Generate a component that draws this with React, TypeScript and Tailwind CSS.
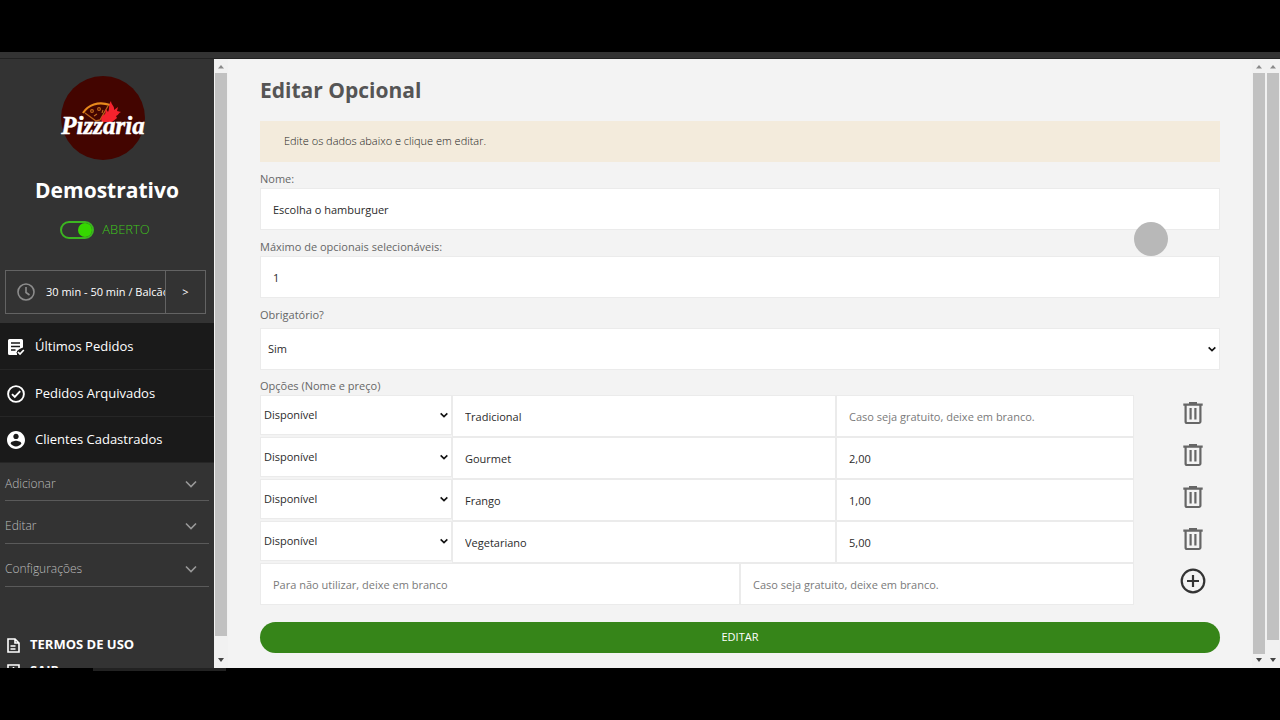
import React from 'react';

const field =
  'min-w-0 border border-[#ebebeb] bg-white px-3 text-[11px] text-[#2b2b2b] outline-none placeholder:text-[#7a7a7a]';

const menu = [
  { label: 'Últimos Pedidos', icon: <OrdersIcon /> },
  { label: 'Pedidos Arquivados', icon: <CheckIcon /> },
  { label: 'Clientes Cadastrados', icon: <UserIcon /> },
];

const groups = ['Adicionar', 'Editar', 'Configurações'];

const options = [
  { name: 'Tradicional', price: '' },
  { name: 'Gourmet', price: '2,00' },
  { name: 'Frango', price: '1,00' },
  { name: 'Vegetariano', price: '5,00' },
];

function OrdersIcon() {
  return (
    <svg viewBox="0 0 18 18" className="size-[18px]" fill="none">
      <path d="M2.500 1h12A1.500 1.500 0 0 1 16 2.500V9.500L12.500 11 10 13v4H2.500A1.500 1.500 0 0 1 1 15.500v-13A1.500 1.500 0 0 1 2.500 1z" fill="currentColor" />
      <path d="M4 5h9M4 8.500h9M4 12h4.500" stroke="#1a1a1a" strokeWidth="1.400" />
      <path d="M10.500 13.500l2.500 2.500 4-4.300" stroke="#1a1a1a" strokeWidth="3.600" />
      <path d="M11 14l2 2 3.800-4" stroke="currentColor" strokeWidth="1.700" />
    </svg>
  );
}

function CheckIcon() {
  return (
    <svg viewBox="0 0 18 18" className="size-[18px]" fill="none" stroke="currentColor" strokeWidth="1.900">
      <circle cx="9" cy="9" r="7.900" />
      <path d="M5 9.200l2.800 2.800 5.400-5.800" />
    </svg>
  );
}

function UserIcon() {
  return (
    <svg viewBox="2 2 20 20" className="size-[18px]" fill="currentColor">
      <path d="M12 2C6.480 2 2 6.480 2 12s4.480 10 10 10 10-4.480 10-10S17.520 2 12 2zm0 3c1.660 0 3 1.340 3 3s-1.340 3-3 3-3-1.340-3-3 1.340-3 3-3zm0 14.200c-2.500 0-4.710-1.280-6-3.220.030-1.990 4-3.080 6-3.080 1.990 0 5.970 1.090 6 3.080-1.290 1.940-3.500 3.220-6 3.220z" />
    </svg>
  );
}

function TrashIcon() {
  return (
    <svg viewBox="0 0 20 24" className="h-6 w-5" fill="none" stroke="#666" strokeWidth="2.200">
      <path d="M0.300 3.600h19.400M6 2.200h8" />
      <path d="M2.600 4v16.500a1.500 1.500 0 0 0 1.500 1.500h11.800a1.500 1.500 0 0 0 1.500-1.500V4" />
      <path d="M7.600 7v11.500M12.400 7v11.500" />
    </svg>
  );
}

function Logo() {
  return (
    <svg viewBox="0 0 84 84" className="mr-2 size-[84px] overflow-visible">
      <circle cx="42" cy="42" r="42" fill="#430500" />
      <path d="M22 37c5-8 15-12 27-8" fill="none" stroke="#e8891c" strokeWidth="2.200" />
      <path d="M24 37l11 8 4-1 8-14" fill="none" stroke="#b9631a" strokeWidth="1.300" />
      <g fill="none" stroke="#c06a1c" strokeWidth="1.100">
        <circle cx="31" cy="35" r="1.400" />
        <circle cx="38" cy="33" r="1.400" />
        <path d="M33 40l3-2M41 37l1-3" />
      </g>
      <path
        d="M41 46c-2-4 0-6 3-8 1-2 0-3 1-5l2 3c2-3 0-7 3-11 0 4 4 5 3 9l4-3-1 4 4 1c-3 1-2 3-5 4l1 2-5 4z"
        fill="#f5222d"
      />
      <text
        x="42"
        y="58"
        textAnchor="middle"
        fill="#fff"
        stroke="#fff"
        strokeWidth="0.500"
        fontFamily="'Liberation Serif', serif"
        fontStyle="italic"
        fontWeight="700"
        fontSize="25"
      >
        Pizzaria
      </text>
    </svg>
  );
}

function Chevron({ className }: { className: string }) {
  return (
    <svg viewBox="0 0 12 8" className={className} fill="none" stroke="currentColor">
      <path d="M1 1.500l5 5 5-5" />
    </svg>
  );
}

function Scrollbar({ thumb }: { thumb: string }) {
  return (
    <div className="flex w-[14px] shrink-0 flex-col items-center bg-[#f1f1f1] px-px">
      <svg viewBox="0 0 6 4" className="mt-1.5 mb-1 h-1 w-1.5 shrink-0 fill-[#8a8a8a]">
        <path d="M3 0l3 3.500H0z" />
      </svg>
      <div className={`w-full flex-1 bg-[#c1c1c1] ${thumb}`} />
      <svg viewBox="0 0 6 4" className="mb-1.5 h-1 w-1.5 shrink-0 fill-[#444]">
        <path d="M3 4L0 0h6z" />
      </svg>
    </div>
  );
}

function Select({ id, label, value, className }: { id: string; label?: string; value: string; className: string }) {
  return (
    <div className="relative">
      <select
        id={id}
        aria-label={label}
        className={`w-full appearance-none border border-[#ebebeb] bg-white text-[11px] text-[#2b2b2b] outline-none ${className}`}
      >
        <option>{value}</option>
      </select>
      <Chevron className="pointer-events-none absolute top-1/2 right-1 h-1.5 w-2 -translate-y-1/2 stroke-[2.4] text-[#111]" />
    </div>
  );
}

function Sidebar() {
  return (
    <aside className="flex w-[214px] shrink-0 flex-col overflow-hidden bg-[#333]">
      <div className="flex flex-col items-center px-[5px] pt-[17px]">
        <Logo />
        <h2 className="mt-4 text-[21px] leading-7 font-bold text-white">Demostrativo</h2>
        <button className="mt-3.5 mr-1 flex h-6 items-center gap-2 text-[13px] font-light text-[#3fc41c]">
          <span className="flex h-[18px] w-[34px] items-center justify-end rounded-full border-2 border-[#3cb521]">
            <span className="size-[14px] rounded-full bg-[#35d800]" />
          </span>
          ABERTO
        </button>
      </div>

      <div className="mt-7 mr-2 ml-[5px] flex h-11 shrink-0 border border-[#636363] text-[11px] text-white">
        <div className="flex min-w-0 flex-1 items-center gap-[11px] overflow-hidden pl-[11px] whitespace-nowrap">
          <svg viewBox="0 0 18 18" className="size-[18px] shrink-0" fill="none" stroke="#8c8c8c" strokeWidth="1.600">
            <circle cx="9" cy="9" r="8" />
            <path d="M9 4v5.500l3.500 2.500" />
          </svg>
          30 min - 50 min / Balcão
        </div>
        <button className="w-10 border-l border-[#636363]">&gt;</button>
      </div>

      <nav className="mt-[9px] shrink-0">
        {menu.map((item) => (
          <a
            key={item.label}
            href="#"
            className="flex h-[47px] items-center gap-2.5 border-b border-[#262626] bg-[#1a1a1a] px-[7px] pt-px text-[13px] text-white last:h-[46px]"
          >
            {item.icon}
            {item.label}
          </a>
        ))}
      </nav>

      <div className="shrink-0 px-[5px]">
        {groups.map((group) => (
          <button
            key={group}
            className="flex h-[43px] w-full items-center justify-between border-b border-[#5a5a5a] pt-2 pr-3 text-xs font-light text-[#bdbdbd] first:h-[38px] first:pt-1"
          >
            {group}
            <Chevron className="h-2 w-3 stroke-[1.6] text-[#999]" />
          </button>
        ))}
      </div>

      <div className="mt-[45px] shrink-0 pl-[7px] text-[13px] font-bold text-white">
        {['TERMOS DE USO', 'SAIR'].map((label, i) => (
          <a key={label} href="#" className="flex h-[26px] items-center gap-2.5">
            <svg viewBox="0 0 13 15" className="h-[15px] w-[13px]" fill="none" stroke="currentColor" strokeWidth="1.600">
              {i === 0 ? (
                <path d="M1 1h7l4 4v9H1zM8 1v4h4M3.500 8h5M3.500 11h5" />
              ) : (
                <path d="M1 1h11v13H1zM6.500 3v8M4 7.500h5" />
              )}
            </svg>
            {label}
          </a>
        ))}
      </div>
    </aside>
  );
}

export default function App() {
  return (
    <div className="flex h-screen flex-col bg-black pt-[52px] pb-[49px] font-['Open_Sans',sans-serif]">
      <div className="h-[7px] shrink-0 border-b border-[#222] bg-[#333]" />
      <div className="relative flex min-h-0 flex-1 bg-[#f3f3f3]">
        <Sidebar />
        <Scrollbar thumb="mb-[22px]" />

        <main className="min-w-0 flex-1 overflow-hidden px-8 text-[11px] text-[#666]">
          <h1 className="pt-[17px] text-[21px] leading-7 font-bold text-[#555]">Editar Opcional</h1>
          <p className="mt-[17px] flex h-[41px] items-center bg-[#f3ebdc] px-6 font-light text-[#222]">
            Edite os dados abaixo e clique em editar.
          </p>

          <form className="mt-2" onSubmit={(e) => e.preventDefault()}>
            <label htmlFor="nome" className="block h-[18px] leading-[18px]">Nome:</label>
            <input id="nome" className={`${field} h-[42px] w-full`} defaultValue="Escolha o hamburguer" />

            <label htmlFor="maximo" className="mt-2 block h-[18px] leading-[18px]">Máximo de opcionais selecionáveis:</label>
            <input id="maximo" className={`${field} h-[42px] w-full`} defaultValue="1" />

            <label htmlFor="obrigatorio" className="mt-2 mb-1 block h-[18px] leading-[18px]">Obrigatório?</label>
            <Select id="obrigatorio" value="Sim" className="h-[42px] px-[7px]" />

            <h2 className="mt-[7px] h-[18px] leading-[18px]">Opções (Nome e preço)</h2>
            {options.map((option, i) => (
              <div key={option.name} className="flex">
                <div className="w-1/5">
                  <Select id={`status-${i}`} label="Disponibilidade" value="Disponível" className="h-10 px-[3px]" />
                </div>
                <input aria-label="Nome" className={`${field} h-[42px] w-2/5`} defaultValue={option.name} />
                <input
                  aria-label="Preço"
                  className={`${field} h-[42px] w-[31%]`}
                  placeholder="Caso seja gratuito, deixe em branco."
                  defaultValue={option.price}
                />
                <button type="button" aria-label="Remover" className="flex flex-1 items-center justify-center pb-1.5 pl-8">
                  <TrashIcon />
                </button>
              </div>
            ))}
            <div className="flex">
              <input aria-label="Nome" className={`${field} h-[42px] w-1/2`} placeholder="Para não utilizar, deixe em branco" />
              <input aria-label="Preço" className={`${field} h-[42px] w-[41%]`} placeholder="Caso seja gratuito, deixe em branco." />
              <button type="button" aria-label="Adicionar" className="flex flex-1 items-center justify-center pb-1.5 pl-8">
                <svg viewBox="0 0 26 26" className="size-[26px]" fill="none" stroke="#333" strokeWidth="2.200">
                  <circle cx="13" cy="13" r="11.300" />
                  <path d="M13 7v12M7 13h12" />
                </svg>
              </button>
            </div>

            <button className="mt-[17px] h-[31px] w-full rounded-full bg-[#368519] text-white">EDITAR</button>
          </form>
        </main>

        <Scrollbar thumb="mb-1" />
        <Scrollbar thumb="mb-[18px]" />
        <span className="absolute top-[163px] right-[112px] size-[34px] rounded-full bg-[#b8b8b8]" />
      </div>
      <div className="ml-[93px] h-[3px] w-[133px] shrink-0 bg-[#222]" />
    </div>
  );
}
